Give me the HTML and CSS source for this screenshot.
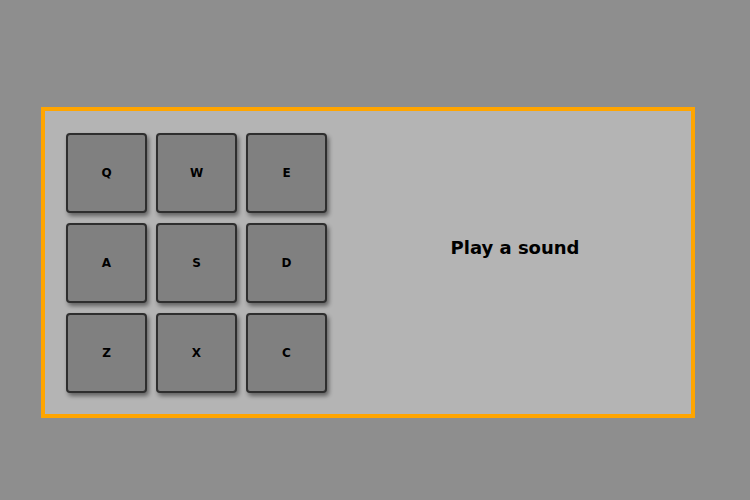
FILE: index.html
```html
<!DOCTYPE html>
<html>
<head>
<meta charset="utf-8">
<link rel="stylesheet" href="styles.css">
</head>
<body>
<div class="drum-machine">
  <div class="pads">
    <div class="pad">Q</div>
    <div class="pad">W</div>
    <div class="pad">E</div>
    <div class="pad">A</div>
    <div class="pad">S</div>
    <div class="pad">D</div>
    <div class="pad">Z</div>
    <div class="pad">X</div>
    <div class="pad">C</div>
  </div>
  <div class="display">Play a sound</div>
</div>
</body>
</html>
```
FILE: styles.css
```css
html, body {
  margin: 0;
  padding: 0;
  background: #8e8e8e;
  height: 100%;
}
body {
  font-family: "DejaVu Sans", "Verdana", sans-serif;
  padding-top: 107px;
  padding-left: 41px;
  box-sizing: border-box;
}
.drum-machine {
  border: 4px solid #ffa500;
  background: #b4b4b4;
  display: flex;
  align-items: flex-start;
  padding: 22px 0 21px 21px;
  box-sizing: content-box;
  width: 625px;
  height: 260px;
}
.pads {
  display: grid;
  grid-template-columns: repeat(3, 81px);
  grid-template-rows: repeat(3, 80px);
  gap: 10px 9px;
}
.pad {
  box-sizing: border-box;
  background: #808080;
  border: 2px solid #2e2e2e;
  border-radius: 4px;
  box-shadow: 2px 3px 4px rgba(0, 0, 0, 0.45);
  display: flex;
  align-items: center;
  justify-content: center;
  font-weight: bold;
  font-size: 12px;
  color: #000;
}
.display {
  flex: 1;
  margin-left: 12px;
  margin-top: 104px;
  text-align: center;
  font-weight: bold;
  font-size: 18px;
  line-height: 21px;
  color: #000;
}
```
